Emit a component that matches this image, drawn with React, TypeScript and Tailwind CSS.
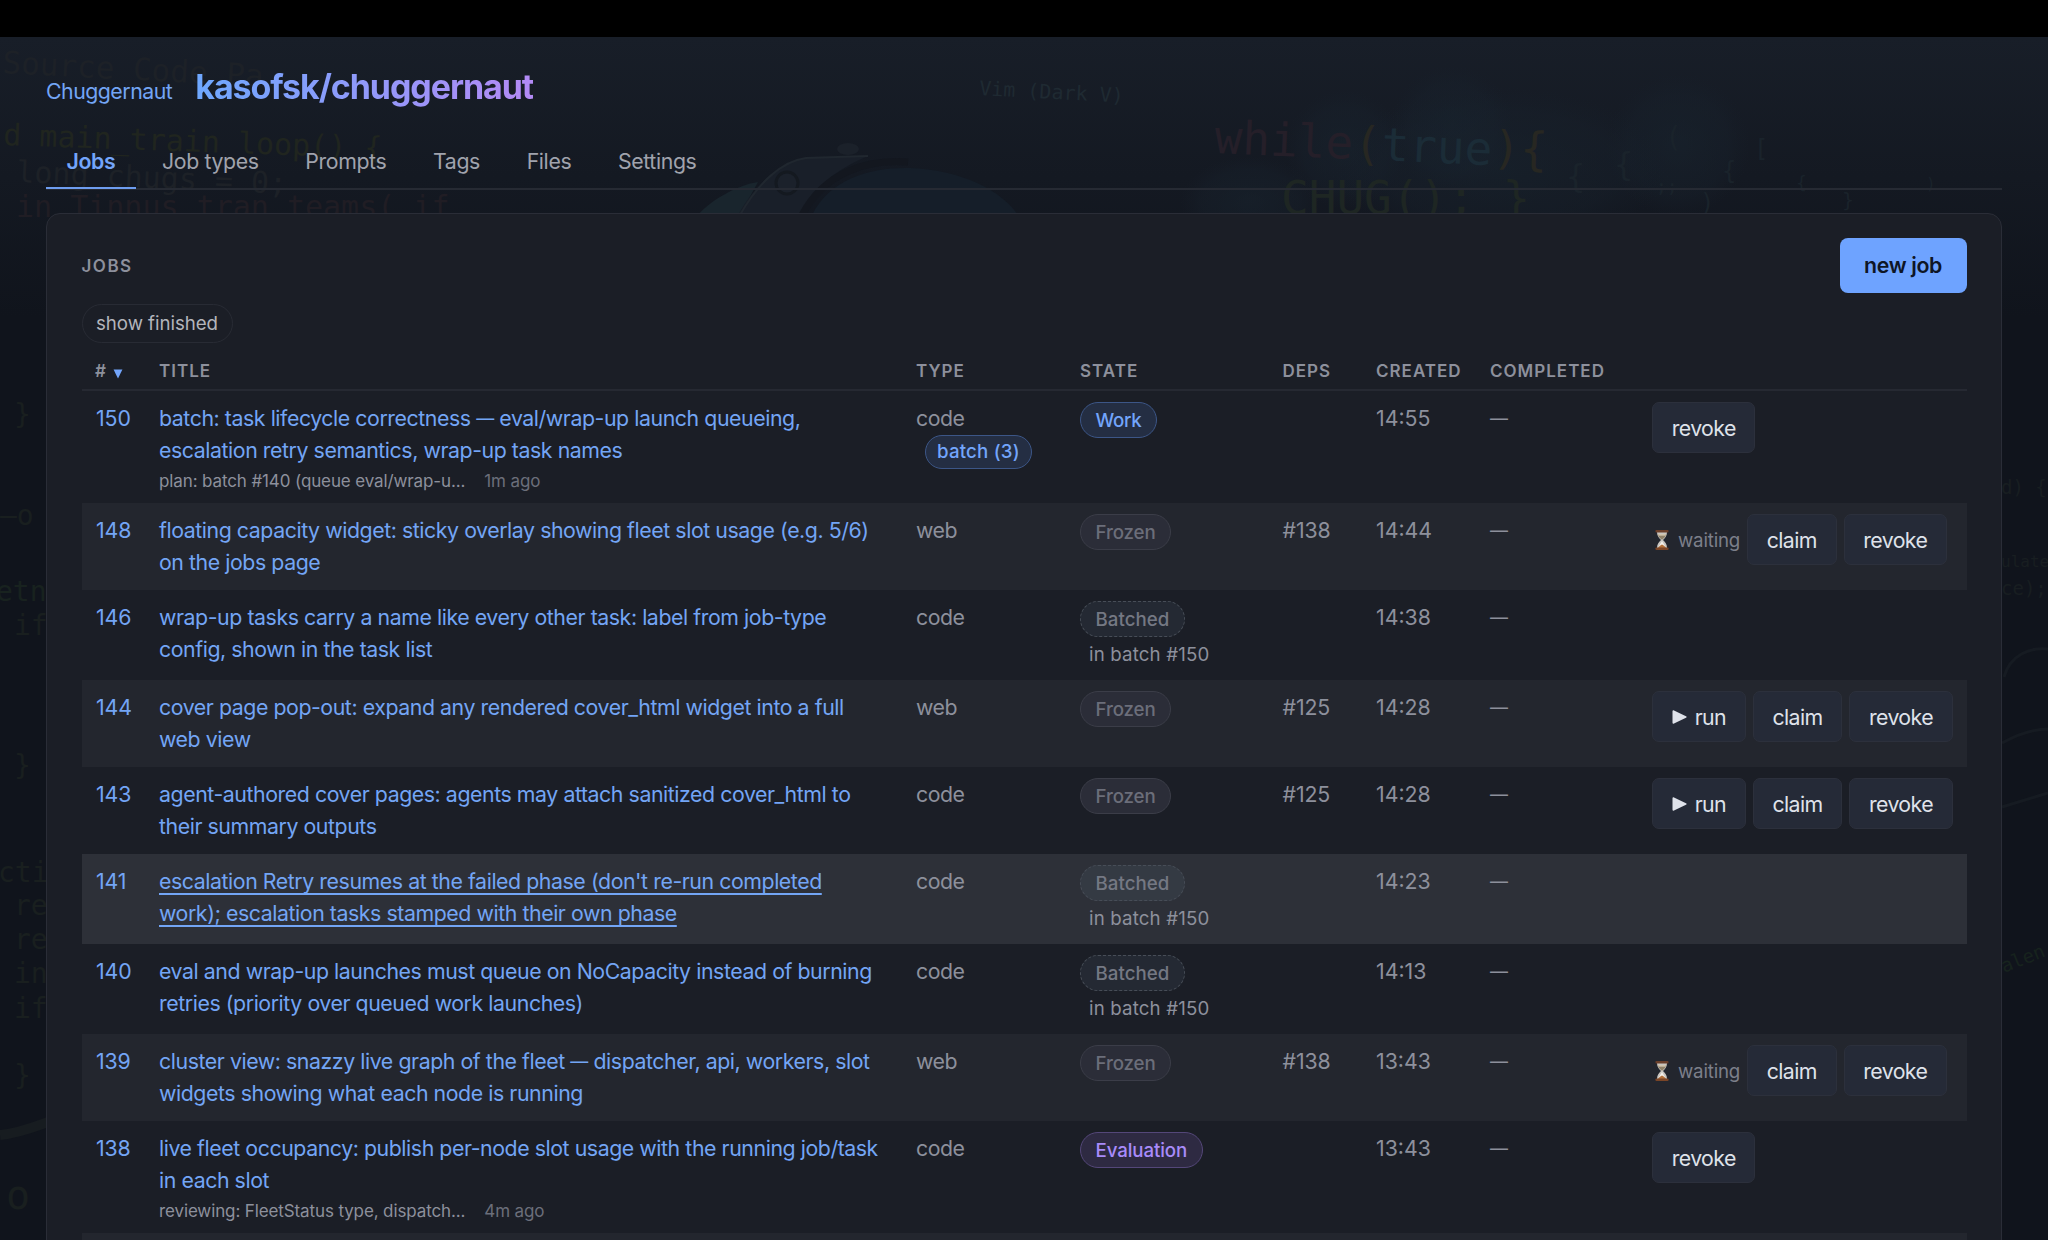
import { Fragment, type ReactNode } from "react";
import clsx from "clsx";

type JobState = "Work" | "Frozen" | "Batched" | "Evaluation";

interface Job {
  id: number;
  title: string[];
  type: string;
  batch?: number;
  state: JobState;
  inBatch?: number;
  dep?: string;
  created: string;
  note?: string;
  ago?: string;
  waiting?: boolean;
  actions: string[];
  height: string;
  hovered?: boolean;
}

const TABS = ["Jobs", "Job types", "Prompts", "Tags", "Files", "Settings"];

const JOBS: Job[] = [
  {
    id: 150,
    title: ["batch: task lifecycle correctness — eval/wrap-up launch queueing,", "escalation retry semantics, wrap-up task names"],
    type: "code",
    batch: 3,
    state: "Work",
    created: "14:55",
    note: "plan: batch #140 (queue eval/wrap-u...",
    ago: "1m ago",
    actions: ["revoke"],
    height: "h-[112px]",
  },
  {
    id: 148,
    title: ["floating capacity widget: sticky overlay showing fleet slot usage (e.g. 5/6)", "on the jobs page"],
    type: "web",
    state: "Frozen",
    dep: "#138",
    created: "14:44",
    waiting: true,
    actions: ["claim", "revoke"],
    height: "h-[87px]",
  },
  {
    id: 146,
    title: ["wrap-up tasks carry a name like every other task: label from job-type", "config, shown in the task list"],
    type: "code",
    state: "Batched",
    inBatch: 150,
    created: "14:38",
    actions: [],
    height: "h-[90px]",
  },
  {
    id: 144,
    title: ["cover page pop-out: expand any rendered cover_html widget into a full", "web view"],
    type: "web",
    state: "Frozen",
    dep: "#125",
    created: "14:28",
    actions: ["run", "claim", "revoke"],
    height: "h-[87px]",
  },
  {
    id: 143,
    title: ["agent-authored cover pages: agents may attach sanitized cover_html to", "their summary outputs"],
    type: "code",
    state: "Frozen",
    dep: "#125",
    created: "14:28",
    actions: ["run", "claim", "revoke"],
    height: "h-[87px]",
  },
  {
    id: 141,
    title: ["escalation Retry resumes at the failed phase (don't re-run completed", "work); escalation tasks stamped with their own phase"],
    type: "code",
    state: "Batched",
    inBatch: 150,
    created: "14:23",
    actions: [],
    height: "h-[90px]",
    hovered: true,
  },
  {
    id: 140,
    title: ["eval and wrap-up launches must queue on NoCapacity instead of burning", "retries (priority over queued work launches)"],
    type: "code",
    state: "Batched",
    inBatch: 150,
    created: "14:13",
    actions: [],
    height: "h-[90px]",
  },
  {
    id: 139,
    title: ["cluster view: snazzy live graph of the fleet — dispatcher, api, workers, slot", "widgets showing what each node is running"],
    type: "web",
    state: "Frozen",
    dep: "#138",
    created: "13:43",
    waiting: true,
    actions: ["claim", "revoke"],
    height: "h-[87px]",
  },
  {
    id: 138,
    title: ["live fleet occupancy: publish per-node slot usage with the running job/task", "in each slot"],
    type: "code",
    state: "Evaluation",
    created: "13:43",
    note: "reviewing: FleetStatus type, dispatch...",
    ago: "4m ago",
    actions: ["revoke"],
    height: "h-[112px]",
  },
];

const COLUMNS = "grid grid-cols-[64px_757px_164px_202.5px_93.5px_114px_162px_1fr] pl-[13.5px]";

const STATE_STYLES: Record<JobState, string> = {
  Work: "border-[#3c5687] bg-[#242e43] text-[#73a5fb] tracking-[-0.3px]",
  Frozen: "border-[#3b3d48] bg-[#2b2d38] text-[#6b6e7a] tracking-[-0.1px]",
  Batched: "border-dashed border-[#474d57] bg-[#7a92a8]/10 text-[#747883] tracking-[0.05px]",
  Evaluation: "border-[#544779] bg-[#2e2a42] text-[#a88bfa] tracking-[-0.1px]",
};

function Backdrop() {
  return (
    <svg
      className="pointer-events-none absolute inset-0 h-full w-full"
      viewBox="0 0 2048 1203"
      preserveAspectRatio="none"
      fontFamily="'DejaVu Sans Mono', monospace"
      aria-hidden="true"
    >
      <defs>
        <radialGradient id="smoke">
          <stop offset="0" stopColor="#192530" stopOpacity="0.5" />
          <stop offset="0.7" stopColor="#18222d" stopOpacity="0.35" />
          <stop offset="1" stopColor="#171f2a" stopOpacity="0" />
        </radialGradient>
      </defs>
      <circle cx="1452" cy="90" r="62" fill="url(#smoke)" />
      <circle cx="1345" cy="112" r="60" fill="url(#smoke)" />
      <circle cx="1678" cy="108" r="72" fill="url(#smoke)" />
      <ellipse cx="1500" cy="130" rx="170" ry="80" fill="url(#smoke)" />
      <ellipse cx="1250" cy="165" rx="70" ry="46" fill="url(#smoke)" />

      {/* driver's helmet */}
      <path d="M698 178C712 162 738 148 758 145L740 178Z" fill="#19252d" />
      <path d="M738 178C756 146 780 126 806 121L868 119C838 132 812 150 800 178Z" fill="#191f29" />
      <path d="M740 178C758 146 782 124 806 121L868 119" stroke="#20272f" strokeWidth="2" fill="none" />
      <path d="M812 178C830 142 870 130 910 131C960 133 1000 152 1018 178Z" fill="#151e29" />
      <path d="M802 178C824 136 866 122 908 125" stroke="#13171f" strokeWidth="7" fill="none" />
      <circle cx="787" cy="146" r="11" fill="#1b212b" stroke="#141920" strokeWidth="3" />
      <ellipse cx="848" cy="112" rx="11" ry="6" fill="#1b212a" />

      <g fontSize="31" fill="#1d2127">
        <text x="2" y="36" transform="rotate(3 2 36)">Source Code Pa</text>
        <text x="3" y="108" fontSize="30" fill="#20251f" transform="rotate(2 3 108)">d main_train_loop() {"{"}</text>
        <text x="16" y="145" fontSize="30" transform="rotate(2.5 16 145)">long chugs = 0;</text>
        <text x="16" y="180" fontSize="30" fill="#201d24">in Tinnus_tran_teams( if</text>
      </g>
      <text x="979" y="58" fontSize="20" fill="#1f2a32" transform="rotate(3 979 58)">Vim (Dark V)</text>
      <g fontSize="46" transform="rotate(2.5 1214 118)">
        <text x="1214" y="116" fill="#251f29">while</text>
        <text x="1353" y="116" fill="#272722">(</text>
        <text x="1381" y="116" fill="#1b2c37">true</text>
        <text x="1492" y="114" fill="#272722">){"{"}</text>
      </g>
      <text x="1281" y="177" fontSize="46" fill="#1e2623">CHUG(); {"}"}</text>
      <g fontSize="32" fill="#1a232b">
        <text x="1566" y="150">{"{"}</text>
        <text x="1614" y="138">{"{"}</text>
        <text x="1665" y="110" fontSize="28">(</text>
        <text x="1722" y="142" fontSize="24">{"{"}</text>
        <text x="1754" y="120" fontSize="24">[</text>
        <text x="1796" y="152" fontSize="18">{"{"}</text>
        <text x="1842" y="170" fontSize="20">{"}"}</text>
        <text x="1700" y="174" fontSize="24">)</text>
        <text x="1656" y="156" fontSize="18">;;</text>
        <text x="1926" y="152" fontSize="16">)</text>
      </g>

      {/* left margin code */}
      <g fontSize="28" fill="#191f1f">
        <text x="14" y="387">{"}"}</text>
        <text x="0" y="488">—o</text>
        <text x="-4" y="564" fill="#18221f">etn</text>
        <text x="14" y="598">if</text>
        <text x="14" y="738">{"}"}</text>
        <text x="-2" y="845">cti</text>
        <text x="14" y="878">re</text>
        <text x="14" y="912">re</text>
        <text x="14" y="946">in</text>
        <text x="14" y="981">if</text>
        <text x="14" y="1048">{"}"}</text>
        <text x="6" y="1172" fontSize="40">o</text>
      </g>
      <path d="M0 1098C20 1096 34 1090 48 1085" stroke="#171c20" strokeWidth="10" fill="none" />

      {/* right margin code */}
      <g fontSize="19" fill="#181e21">
        <text x="2001" y="457">d) {"{"}</text>
        <text x="2001" y="530" fontSize="16">ulate</text>
        <text x="2001" y="558">ce);</text>
        <text x="2004" y="936" fontSize="19" fill="#17231e" transform="rotate(-22 2004 936)">alen</text>
      </g>
      <path d="M2004 640C2010 618 2030 610 2048 612M2002 706C2020 696 2034 692 2048 692M2002 770L2048 756" stroke="#161b22" strokeWidth="3" fill="none" />
    </svg>
  );
}

function Dash() {
  return <span className="align-[1px] text-[18px] leading-none">—</span>;
}

function TitleLine({ text }: { text: string }) {
  return text.split("—").map((part, i) => (
    <Fragment key={i}>
      {i > 0 && <Dash />}
      {part}
    </Fragment>
  ));
}

function Hourglass() {
  return (
    <svg viewBox="0 0 14 20" className="h-5 w-3.5 shrink-0" aria-hidden="true">
      <path d="M2 2h10c0 4-2 6-4 8 2 2 4 4 4 8H2c0-4 2-6 4-8-2-2-4-4-4-8z" fill="#c9c6c1" />
      <path d="M2.8 4h8.4c-.4 2.600-2 4-4.200 5.800C4.800 8 3.200 6.600 2.800 4z" fill="#8f8168" />
      <path d="M3 4.200h8l-.5 1.300h-7z" fill="#e9dcc5" />
      <path d="M7 11l3.500 6h-7z" fill="#f4f1ec" />
      <path d="M3 18c1-2 3-2.800 4-3.600 1 .8 3 1.600 4 3.600z" fill="#b3713a" />
      <rect x=".5" y="0" width="13" height="2.500" rx=".8" fill="#6b3f2a" />
      <rect x=".5" y="17.500" width="13" height="2.500" rx=".8" fill="#7a4527" />
    </svg>
  );
}

function StatePill({ state }: { state: JobState }) {
  return (
    <span
      className={clsx(
        "mt-[11px] flex h-9 w-fit items-center rounded-full border px-[14.5px] pt-0.5 text-[18.7px] font-medium",
        STATE_STYLES[state],
      )}
    >
      {state}
    </span>
  );
}

function ActionButton({ children }: { children: ReactNode }) {
  return (
    <button
      type="button"
      className="flex h-[51px] items-center gap-2 rounded-[7px] border border-[#2c303c] bg-[#252a37] px-[18.7px] text-[21.3px] tracking-[-0.6px] text-[#dfe2ea]"
    >
      {children}
    </button>
  );
}

function JobRow({ job, striped }: { job: Job; striped: boolean }) {
  return (
    <div
      className={clsx(
        COLUMNS,
        job.height,
        "text-[21.3px] leading-8 tracking-[-0.5px] text-[#8d909c]",
        job.hovered ? "bg-[#2d3038]" : striped && "bg-[#23262e]",
      )}
    >
      <a className="pt-[11px] pl-px tracking-[-0.1px] text-[#73a5f5]">{job.id}</a>
      <div className="pt-[11px] tracking-[-0.43px]">
        <a className={clsx("block whitespace-nowrap text-[#73a5f5]", job.hovered && "underline decoration-2 underline-offset-4")}>
          <TitleLine text={job.title[0]} />
          <br />
          <TitleLine text={job.title[1]} />
        </a>
        {job.note && (
          <div className="flex gap-[19px] text-[17px] leading-[30px] tracking-[-0.12px]">
            <span className="text-[#8d909c]">{job.note}</span>
            <span className="text-[#6b6e7a]">{job.ago}</span>
          </div>
        )}
      </div>
      <div className="pt-[11px]">
        {job.type}
        {job.batch && (
          <span className="ml-[9px] mt-px flex h-[34px] w-fit items-center rounded-full border border-[#3c5687] bg-[#242e43] px-[11px] text-[18.7px] font-medium tracking-[0.2px] text-[#73a5fb]">
            batch ({job.batch})
          </span>
        )}
      </div>
      <div>
        <StatePill state={job.state} />
        {job.inBatch && <div className="ml-[9px] text-[18.7px] leading-[35px] tracking-[0.15px]">in batch #{job.inBatch}</div>}
      </div>
      <span className="pt-[11px] tracking-[-0.1px]">{job.dep}</span>
      <span className="pt-[11px] tracking-normal">{job.created}</span>
      <span className="pt-[11px]">
        <Dash />
      </span>
      <div className="flex items-start gap-[7px] pt-[11px]">
        {job.waiting && (
          <span className="flex h-[51px] items-center gap-[9px] pl-[3px] text-[18.7px] tracking-[-0.2px] text-[#7c7f8a]">
            <Hourglass />
            <span className="pt-0.5">waiting</span>
          </span>
        )}
        {job.actions.map((action) => (
          <ActionButton key={action}>
            {action === "run" && (
              <svg viewBox="0 0 15 14" className="h-3.5 w-[15px]" aria-hidden="true">
                <path d="M.5 1.200C.5.300 1.200 0 2 .4l12 5.800c.8.400.8 1.200 0 1.600L2 13.600c-.8.400-1.500.1-1.500-.8z" fill="currentColor" />
              </svg>
            )}
            {action}
          </ActionButton>
        ))}
      </div>
    </div>
  );
}

export default function App() {
  return (
    <div className="flex h-[1240px] w-[2048px] flex-col overflow-hidden bg-black font-['Inter','Liberation_Sans',sans-serif]">
      <div className="h-[37px] shrink-0" />
      <div className="relative flex-1 overflow-hidden bg-[#10141c] bg-[linear-gradient(180deg,#181e28_0px,#141922_140px,#10141c_280px)]">
        <Backdrop />
        <div className="relative mx-[46px] flex h-full flex-col">
          <header className="flex h-[100px] shrink-0 items-baseline gap-[23px] pt-[28px]">
            <a className="text-[21.3px] tracking-[-0.5px] text-[#73a5f5]">Chuggernaut</a>
            <h1 className="bg-[linear-gradient(90deg,#6ea8ff,#b38af5)] bg-clip-text text-[34px] leading-[44px] font-bold tracking-[-1.08px] text-transparent">
              kasofsk/chuggernaut
            </h1>
          </header>

          <nav className="flex h-[53px] shrink-0 gap-[5.7px] border-b-2 border-[#262a33]">
            {TABS.map((tab, i) => (
              <a
                key={tab}
                className={clsx(
                  "-mb-px flex items-center border-b-2 px-[20.5px] text-[21.3px] tracking-[-0.38px]",
                  i === 0 ? "border-[#6e9df0] font-semibold text-[#73a5fb]" : "border-transparent text-[#a0a3ad]",
                )}
              >
                {tab}
              </a>
            ))}
          </nav>

          <section className="mt-[23px] h-[1100px] shrink-0 rounded-t-[14px] border border-[#2a2d37] bg-[#1b1e26] px-[34.5px]">
            <div className="flex h-[79px] items-end justify-between">
              <h2 className="pb-3.5 text-[17px] font-semibold tracking-[1.5px] text-[#8d909c]">JOBS</h2>
              <button type="button" className="h-[55px] w-[127px] rounded-lg bg-[#6ea3ff] text-[21.3px] font-semibold tracking-[-0.35px] text-[#0e1626]">
                new job
              </button>
            </div>
            <button
              type="button"
              className="mt-[11px] flex h-[39px] w-[151px] items-center justify-center rounded-full border border-[#282b34] pt-0.5 text-[18.7px] tracking-[-0.05px] text-[#b3b5bc]"
            >
              show finished
            </button>

            <div className={clsx(COLUMNS, "h-[48px] items-center border-b-2 border-[#262932] text-[17px] font-semibold tracking-[1px] text-[#8d909c]")}>
              <span className="flex items-center gap-1.5 pt-3">
                #
                <svg viewBox="0 0 9 9" className="mt-1 h-2.5 w-2.5" aria-hidden="true">
                  <path d="M.5.500h8L4.500 8.500z" fill="#73a5fb" />
                </svg>
              </span>
              {["TITLE", "TYPE", "STATE", "DEPS", "CREATED", "COMPLETED"].map((name) => (
                <span key={name} className="pt-3">{name}</span>
              ))}
            </div>

            {JOBS.map((job, i) => (
              <JobRow key={job.id} job={job} striped={i % 2 === 1} />
            ))}
            <div className="h-[88px] bg-[#23262e]" />
          </section>
        </div>
      </div>
    </div>
  );
}
